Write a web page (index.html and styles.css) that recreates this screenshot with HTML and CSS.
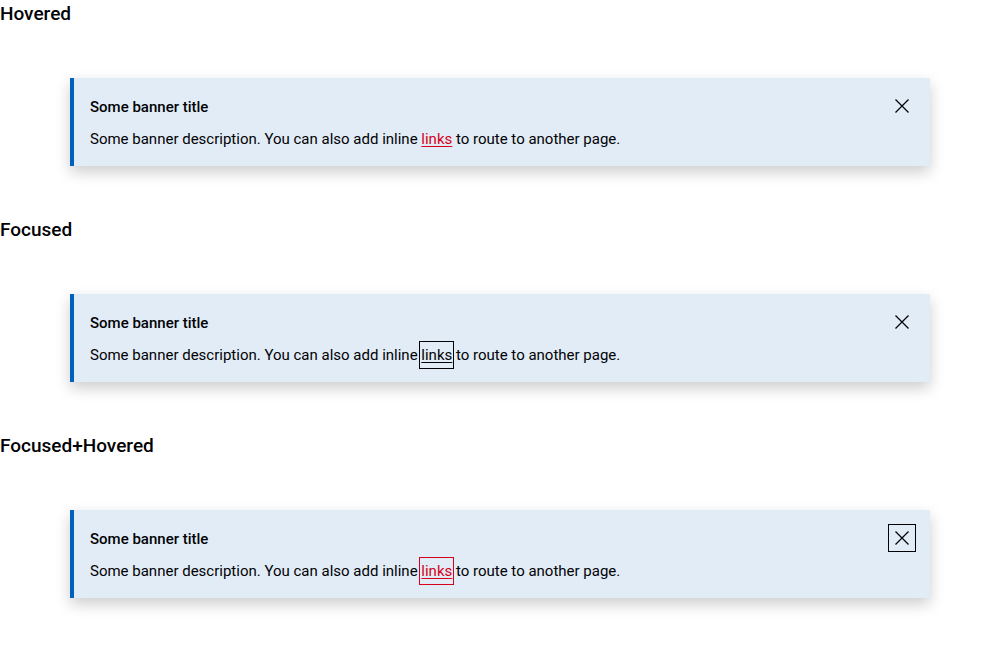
FILE: index.html
```html
<!DOCTYPE html>
<html lang="en">
<head>
<meta charset="utf-8">
<title>Banner states</title>
<link rel="stylesheet" href="styles.css">
</head>
<body>
<section class="state">
  <h2 class="state-title">Hovered</h2>
  <div class="banner">
    <div class="banner-content">
      <p class="banner-heading">Some banner title</p>
      <p class="banner-desc">Some banner description. You can also add inline <a href="#" class="link link-hover">links</a> to route to another page.</p>
    </div>
    <button class="close" type="button" aria-label="Close"><svg viewBox="0 0 24 24" width="24" height="24"><path d="M5.5 5.5l13 13M18.5 5.5l-13 13" stroke="#010205" stroke-width="1.3" fill="none"/></svg></button>
  </div>
</section>
<section class="state">
  <h2 class="state-title">Focused</h2>
  <div class="banner">
    <div class="banner-content">
      <p class="banner-heading">Some banner title</p>
      <p class="banner-desc">Some banner description. You can also add inline <a href="#" class="link link-focus">links</a> to route to another page.</p>
    </div>
    <button class="close" type="button" aria-label="Close"><svg viewBox="0 0 24 24" width="24" height="24"><path d="M5.5 5.5l13 13M18.5 5.5l-13 13" stroke="#010205" stroke-width="1.3" fill="none"/></svg></button>
  </div>
</section>
<section class="state">
  <h2 class="state-title">Focused+Hovered</h2>
  <div class="banner">
    <div class="banner-content">
      <p class="banner-heading">Some banner title</p>
      <p class="banner-desc">Some banner description. You can also add inline <a href="#" class="link link-focus link-hover">links</a> to route to another page.</p>
    </div>
    <button class="close close-focus" type="button" aria-label="Close"><svg viewBox="0 0 24 24" width="24" height="24"><path d="M5.5 5.5l13 13M18.5 5.5l-13 13" stroke="#010205" stroke-width="1.3" fill="none"/></svg></button>
  </div>
</section>
</body>
</html>
```
FILE: styles.css
```css
html, body {
  margin: 0;
  padding: 0;
  background: #fff;
}
body {
  font-family: Roboto, "Liberation Sans", sans-serif;
  color: #010205;
}
.state {
  padding-bottom: 50px;
}
.state-title {
  margin: 0;
  font-size: 19px;
  line-height: 28px;
  font-weight: 500;
  height: 30px;
}
.banner {
  margin: 48px 70px 0 70px;
  display: flex;
  align-items: flex-start;
  background: #e2ecf6;
  border-left: 4px solid #0061bd;
  padding: 17px 14px 15px 16px;
  box-shadow: 0 6px 14px rgba(0, 0, 0, 0.2);
}
.banner-content {
  flex: 1;
  display: flex;
  flex-direction: column;
  gap: 8px;
}
.banner-heading {
  margin: 0;
  font-size: 15px;
  line-height: 24px;
  font-weight: 500;
}
.banner-desc {
  margin: 0;
  font-size: 15px;
  line-height: 24px;
}
.link {
  color: #010205;
  text-decoration: underline;
  text-underline-offset: 2px;
  padding: 3px 0;
}
.link-focus {
  outline: 1px solid #010205;
  outline-offset: 1px;
}
.link-hover {
  color: #d5001c;
  outline-color: #d5001c;
}
.close {
  margin: -3px 0 0 0;
  width: 28px;
  height: 28px;
  padding: 2px;
  border: 0;
  background: transparent;
  display: flex;
  align-items: center;
  justify-content: center;
}
.close svg {
  display: block;
}
.close-focus {
  outline: 1px solid #010205;
  outline-offset: -1px;
}
```
